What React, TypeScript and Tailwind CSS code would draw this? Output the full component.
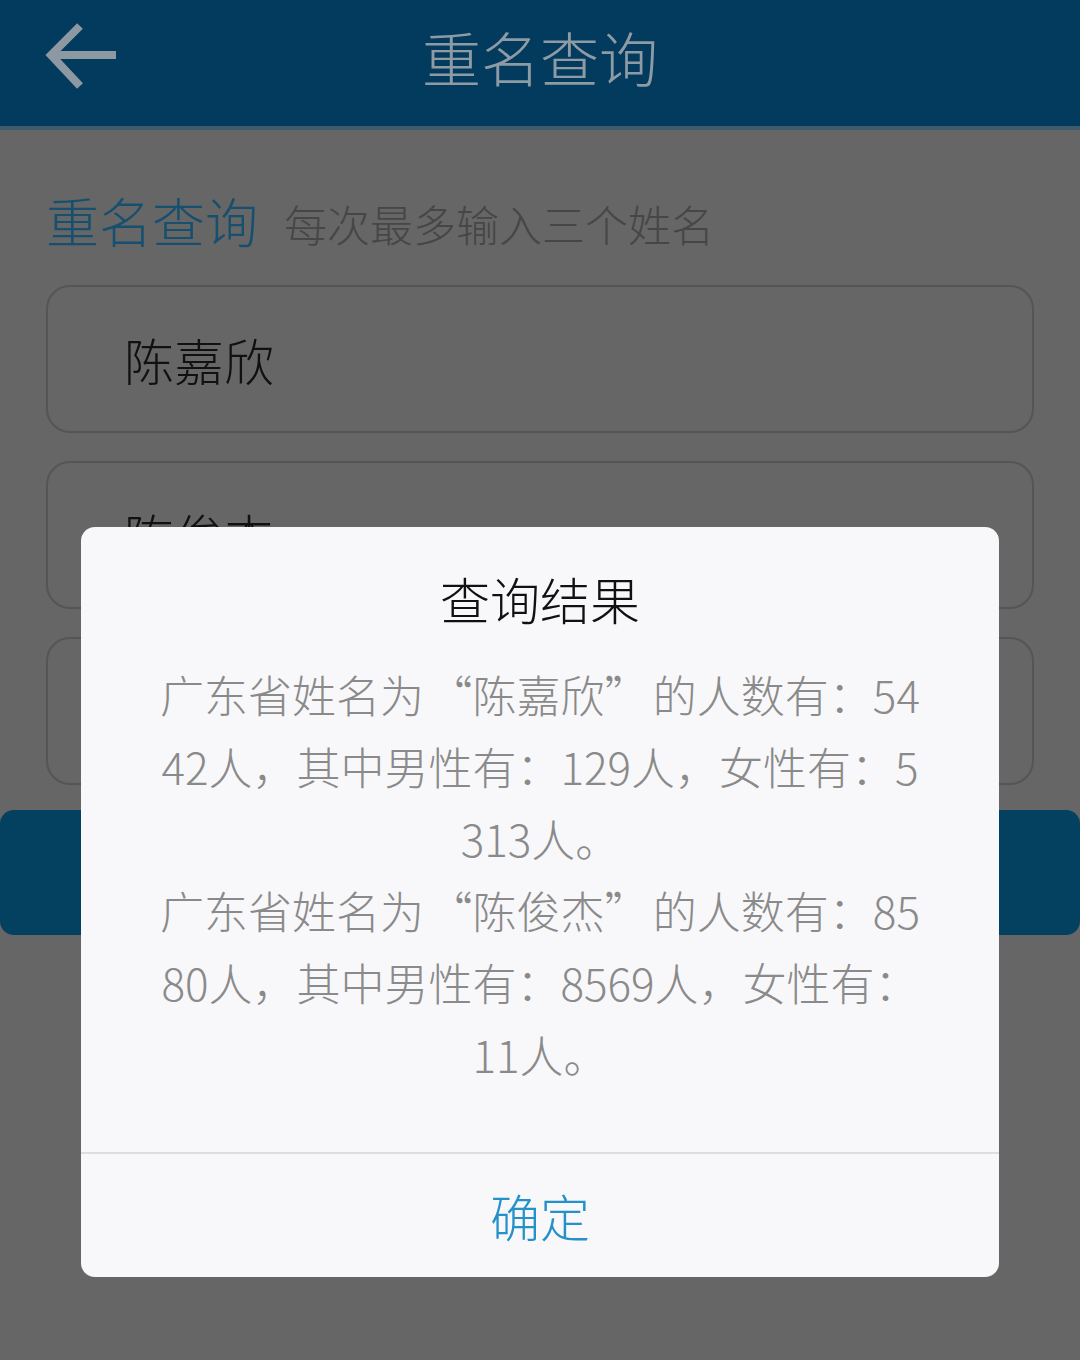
import React from "react";

const FONT = { fontFamily: '"Noto Sans CJK SC", "Noto Sans", sans-serif' };

const NAMES = ["陈嘉欣", "陈俊杰", ""];

type Line = { pre: string; name?: string; post?: string };

const RESULT_LINES: Line[] = [
  { pre: "广东省姓名为", name: "陈嘉欣", post: "的人数有：54" },
  { pre: "42人，其中男性有：129人，女性有：5" },
  { pre: "313人。" },
  { pre: "广东省姓名为", name: "陈俊杰", post: "的人数有：85" },
  { pre: "80人，其中男性有：8569人，女性有：" },
  { pre: "11人。" },
];

function BackArrow() {
  return (
    <svg width="76" height="68" viewBox="0 0 76 68" fill="none">
      <path
        d="M72 33H8M36 4L7 33l29 31"
        stroke="#8d99a2"
        strokeWidth="8"
        strokeLinecap="butt"
        strokeLinejoin="miter"
      />
    </svg>
  );
}

export default function App() {
  return (
    <div lang="zh-CN" className="relative min-h-[1360px] w-[1080px] overflow-hidden bg-[#666666]" style={FONT}>
      {/* header */}
      <div className="flex h-[130px] items-center border-b-4 border-[#3f5b6e] bg-[#023b5e] px-[44px] pb-[14px]">
        <BackArrow />
        <div className="flex-1 pr-[76px] text-center text-[59px] font-light leading-none text-[#8e9ba5]">
          重名查询
        </div>
      </div>

      <div className="px-[46px] pt-[64px]">
        <div className="flex items-end gap-[26px]">
          <span className="text-[53px] font-light leading-none text-[#17506f]">重名查询</span>
          <span className="pb-[2px] text-[43px] font-light leading-none text-[#464646]">
            每次最多输入三个姓名
          </span>
        </div>

        <div className="mt-[38px] flex flex-col gap-[28px]">
          {NAMES.map((n, i) => (
            <div
              key={i}
              className="flex h-[148px] items-center rounded-[24px] border-2 border-[#555555] pl-[76px] text-[50px] font-light text-[#111111]"
            >
              {n}
            </div>
          ))}
        </div>
      </div>

      <div className="mt-[25px] h-[125px] rounded-[14px] bg-[#04405f]" />

      {/* dialog */}
      <div className="absolute inset-0 flex justify-center pt-[527px]">
        <div className="flex h-[750px] w-[918px] flex-col rounded-[14px] bg-[#f8f8fa]">
          <div className="pt-[34px] text-center text-[50px] font-light leading-[74px] text-[#111111]">
            查询结果
          </div>
          <div className="mt-[23px] px-[20px] text-center text-[44px] font-light leading-[72px] text-[#8a8a8a]">
            {RESULT_LINES.map((l, i) => (
              <div key={i} className="whitespace-nowrap">
                {l.pre}
                {l.name && (
                  <>
                    <span className="inline-block w-[1.1em] text-right">“</span>
                    {l.name}
                    <span className="inline-block w-[1.1em] text-left">”</span>
                  </>
                )}
                {l.post}
              </div>
            ))}
          </div>
          <div className="mt-auto flex h-[125px] items-center justify-center border-t-2 border-[#dddddf] text-[50px] font-light text-[#2491c9]">
            确定
          </div>
        </div>
      </div>
    </div>
  );
}
